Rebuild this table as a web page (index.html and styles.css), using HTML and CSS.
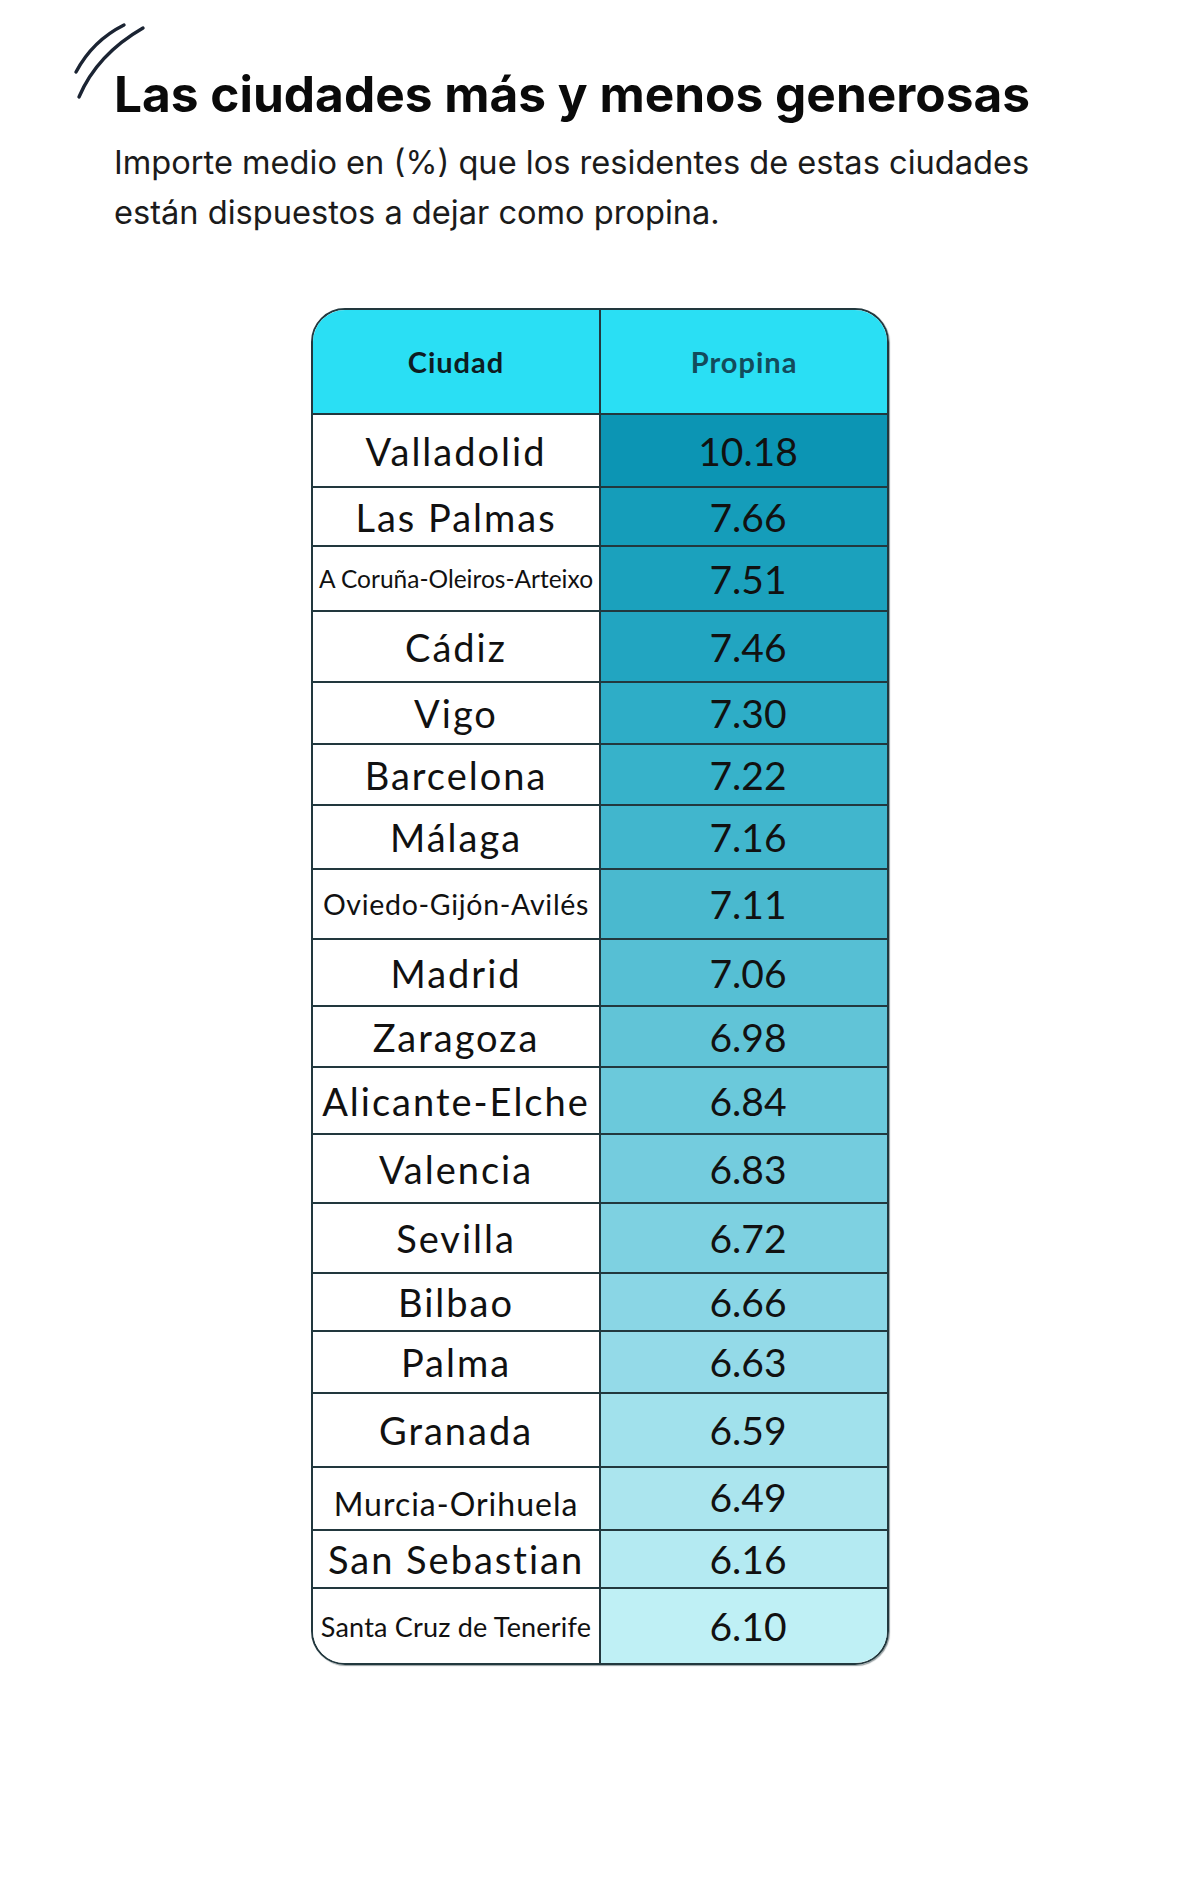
FILE: index.html
```html
<!DOCTYPE html>
<html lang="es">
<head>
<meta charset="utf-8">
<title>Las ciudades más y menos generosas</title>
<link rel="stylesheet" href="styles.css">
</head>
<body>
<div class="page">
  <header class="intro">
    <svg class="swoosh" width="100" height="100" viewBox="0 0 100 100" aria-hidden="true">
      <path d="M16 57 C 25 40, 40 22, 64 10" fill="none" stroke="#1b2433" stroke-width="3.4" stroke-linecap="round"/>
      <path d="M19 82 C 30 56, 50 32, 83 13" fill="none" stroke="#1b2433" stroke-width="3.4" stroke-linecap="round"/>
    </svg>
    <h1 class="title">Las ciudades más y menos generosas</h1>
    <p class="subtitle">Importe medio en (%) que los residentes de estas ciudades<br>están dispuestos a dejar como propina.</p>
  </header>

  <section class="table">
    <div class="cell head head-city">Ciudad</div>
    <div class="cell head head-value">Propina</div>

    <div class="cell city">Valladolid</div><div class="cell value" style="background:#0c95b4">10.18</div>
    <div class="cell city">Las Palmas</div><div class="cell value" style="background:#159dba">7.66</div>
    <div class="cell city small">A Coruña-Oleiros-Arteixo</div><div class="cell value" style="background:#1ba1bd">7.51</div>
    <div class="cell city">Cádiz</div><div class="cell value" style="background:#22a5c1">7.46</div>
    <div class="cell city">Vigo</div><div class="cell value" style="background:#2eadc7">7.30</div>
    <div class="cell city">Barcelona</div><div class="cell value" style="background:#37b2ca">7.22</div>
    <div class="cell city">Málaga</div><div class="cell value" style="background:#41b6cd">7.16</div>
    <div class="cell city compact">Oviedo-Gijón-Avilés</div><div class="cell value" style="background:#4ab9cf">7.11</div>
    <div class="cell city">Madrid</div><div class="cell value" style="background:#56bfd4">7.06</div>
    <div class="cell city">Zaragoza</div><div class="cell value" style="background:#61c4d7">6.98</div>
    <div class="cell city">Alicante-Elche</div><div class="cell value" style="background:#6bc9db">6.84</div>
    <div class="cell city">Valencia</div><div class="cell value" style="background:#74ccde">6.83</div>
    <div class="cell city">Sevilla</div><div class="cell value" style="background:#7ed1e1">6.72</div>
    <div class="cell city">Bilbao</div><div class="cell value" style="background:#8ad6e5">6.66</div>
    <div class="cell city">Palma</div><div class="cell value" style="background:#94dae8">6.63</div>
    <div class="cell city">Granada</div><div class="cell value" style="background:#a1e1ec">6.59</div>
    <div class="cell city medium low">Murcia-Orihuela</div><div class="cell value high" style="background:#abe5ee">6.49</div>
    <div class="cell city">San Sebastian</div><div class="cell value" style="background:#b4eaf2">6.16</div>
    <div class="cell city narrow">Santa Cruz de Tenerife</div><div class="cell value" style="background:#bff0f5">6.10</div>
  </section>
</div>
</body>
</html>
```

FILE: styles.css
```css
* {
  box-sizing: border-box;
}

html, body {
  margin: 0;
  padding: 0;
  background: #ffffff;
}

.page {
  position: relative;
  width: 1200px;
  min-height: 1886px;
}

.intro {
  padding-left: 114px;
  padding-top: 64px;
}

.swoosh {
  position: absolute;
  left: 60px;
  top: 15px;
  overflow: visible;
}

.title {
  margin: 0;
  font-family: "Inter", "Liberation Sans", sans-serif;
  font-weight: 700;
  font-size: 49.6px;
  line-height: 60px;
  letter-spacing: 0;
  color: #0a0a0a;
}

.subtitle {
  margin: 13px 0 0;
  font-family: "Inter", "Liberation Sans", sans-serif;
  font-weight: 400;
  font-size: 32.6px;
  line-height: 50px;
  color: #1b1b1b;
}

.table {
  width: 578px;
  margin: 71px auto 0;
  border: 2px solid #22383e;
  border-radius: 34px;
  overflow: hidden;
  box-shadow: 1px 1px 1px rgba(20, 40, 45, 0.45);
  display: grid;
  grid-template-columns: 288px 1fr;
  grid-template-rows: 103px 73px 59px 65px 71px 62px 61px 64px 70px 67px 61px 67px 69px 70px 58px 62px 74px 63px 58px 76px;
}

.cell {
  display: flex;
  align-items: center;
  justify-content: center;
  border-top: 2px solid #22383e;
  font-family: "Lato", "Liberation Sans", sans-serif;
  color: #111111;
  white-space: nowrap;
}

.city {
  border-right: 2px solid #22383e;
  background: #ffffff;
  font-size: 38px;
  letter-spacing: 2px;
}

.city.small {
  font-size: 24.5px;
  letter-spacing: 0;
}

.city.compact {
  font-size: 28.5px;
  letter-spacing: 0.7px;
}

.city.narrow {
  font-size: 27px;
  letter-spacing: 0.2px;
}

.city.medium {
  font-size: 32px;
  letter-spacing: 1px;
}

.city.low {
  align-items: flex-end;
  padding-bottom: 6px;
}

.value {
  font-size: 39px;
  padding-left: 8px;
}

.value.high {
  align-items: flex-start;
  padding-top: 6px;
}

.head {
  border-top: none;
  background: #2adff4;
  font-family: "Lato", "Liberation Sans", sans-serif;
  font-weight: 700;
  font-size: 29px;
  letter-spacing: 1px;
}

.head-city {
  border-right: 2px solid #22383e;
  color: #0e1c22;
}

.head-value {
  color: #134b5c;
}
```
